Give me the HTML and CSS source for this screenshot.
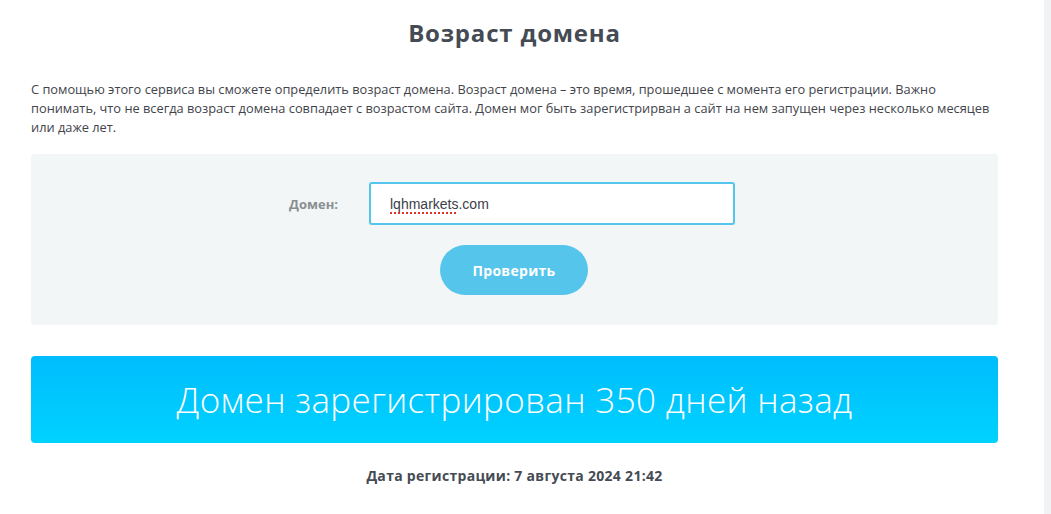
FILE: index.html
```html
<!DOCTYPE html>
<html lang="ru">
<head>
<meta charset="utf-8">
<title>Возраст домена</title>
<link rel="stylesheet" href="styles.css">
</head>
<body>
<div class="page">
  <main class="content">
    <h1 class="title">Возраст домена</h1>
    <p class="intro">С помощью этого сервиса вы сможете определить возраст домена. Возраст домена – это время, прошедшее с момента его регистрации. Важно понимать, что не всегда возраст домена совпадает с возрастом сайта. Домен мог быть зарегистрирван а сайт на нем запущен через несколько месяцев или даже лет.</p>
    <section class="panel">
      <div class="field-row">
        <label class="label" for="domain">Домен:</label>
        <div class="input"><span class="spell">lqhmarkets</span>.com</div>
      </div>
      <div class="btn-row">
        <button class="btn">Проверить</button>
      </div>
    </section>
    <div class="result">Домен зарегистрирован 350 дней назад</div>
    <p class="date">Дата регистрации: 7 августа 2024 21:42</p>
  </main>
  <div class="scrollbar"></div>
</div>
</body>
</html>
```

FILE: styles.css
```css
html, body {
  margin: 0;
  padding: 0;
  background: #ffffff;
}
body {
  font-family: "Open Sans", "Noto Sans", sans-serif;
  color: #454b54;
}
.page {
  display: flex;
  height: 514px;
  overflow: hidden;
}
.content {
  width: 967px;
  margin-left: 31px;
  display: flex;
  flex-direction: column;
}
.scrollbar {
  margin-left: auto;
  width: 7px;
  background: #f1f2f4;
}
.title {
  margin: 17px 0 0;
  text-align: center;
  font-size: 24px;
  line-height: 32px;
  font-weight: 700;
  letter-spacing: 0.8px;
  color: #454b54;
}
.intro {
  margin: 31px 0 0;
  font-size: 12.8px;
  line-height: 19px;
  color: #3f444b;
  letter-spacing: 0;
}
.panel {
  margin-top: 17px;
  height: 171px;
  box-sizing: border-box;
  background: #f3f6f7;
  border-radius: 4px;
  padding-top: 28px;
  display: flex;
  flex-direction: column;
}
.field-row {
  display: flex;
  align-items: center;
  height: 43px;
}
.label {
  width: 307px;
  text-align: right;
  font-size: 13px;
  font-weight: 700;
  color: #8a8e92;
}
.input {
  margin-left: 31px;
  width: 366px;
  height: 43px;
  box-sizing: border-box;
  border: 2px solid #56c5ec;
  border-radius: 3px;
  background: #fff;
  padding-left: 19px;
  display: flex;
  align-items: center;
  font-family: "Liberation Sans", Arial, sans-serif;
  font-size: 14px;
  color: #3c4048;
}
.spell {
  text-decoration: underline dotted #e0302a;
  text-decoration-thickness: 2px;
  text-underline-offset: 4px;
}
.btn-row {
  display: flex;
  padding-left: 409px;
  margin-top: 20px;
}
.btn {
  width: 148px;
  height: 50px;
  border: 0;
  border-radius: 25px;
  background: #56c5ec;
  color: #fff;
  font-family: "Open Sans", "Noto Sans", sans-serif;
  font-weight: 700;
  font-size: 14px;
  letter-spacing: 0.3px;
  padding: 0;
}
.result {
  margin-top: 31px;
  height: 87px;
  border-radius: 4px;
  background: linear-gradient(#00bdfd, #00d2ff);
  color: #fff;
  display: flex;
  align-items: center;
  justify-content: center;
  font-size: 35px;
  font-weight: 300;
  letter-spacing: 0.35px;
}
.date {
  margin: 23px 0 0;
  text-align: center;
  font-size: 14px;
  font-weight: 700;
  letter-spacing: 0.3px;
  color: #454b54;
}
```
